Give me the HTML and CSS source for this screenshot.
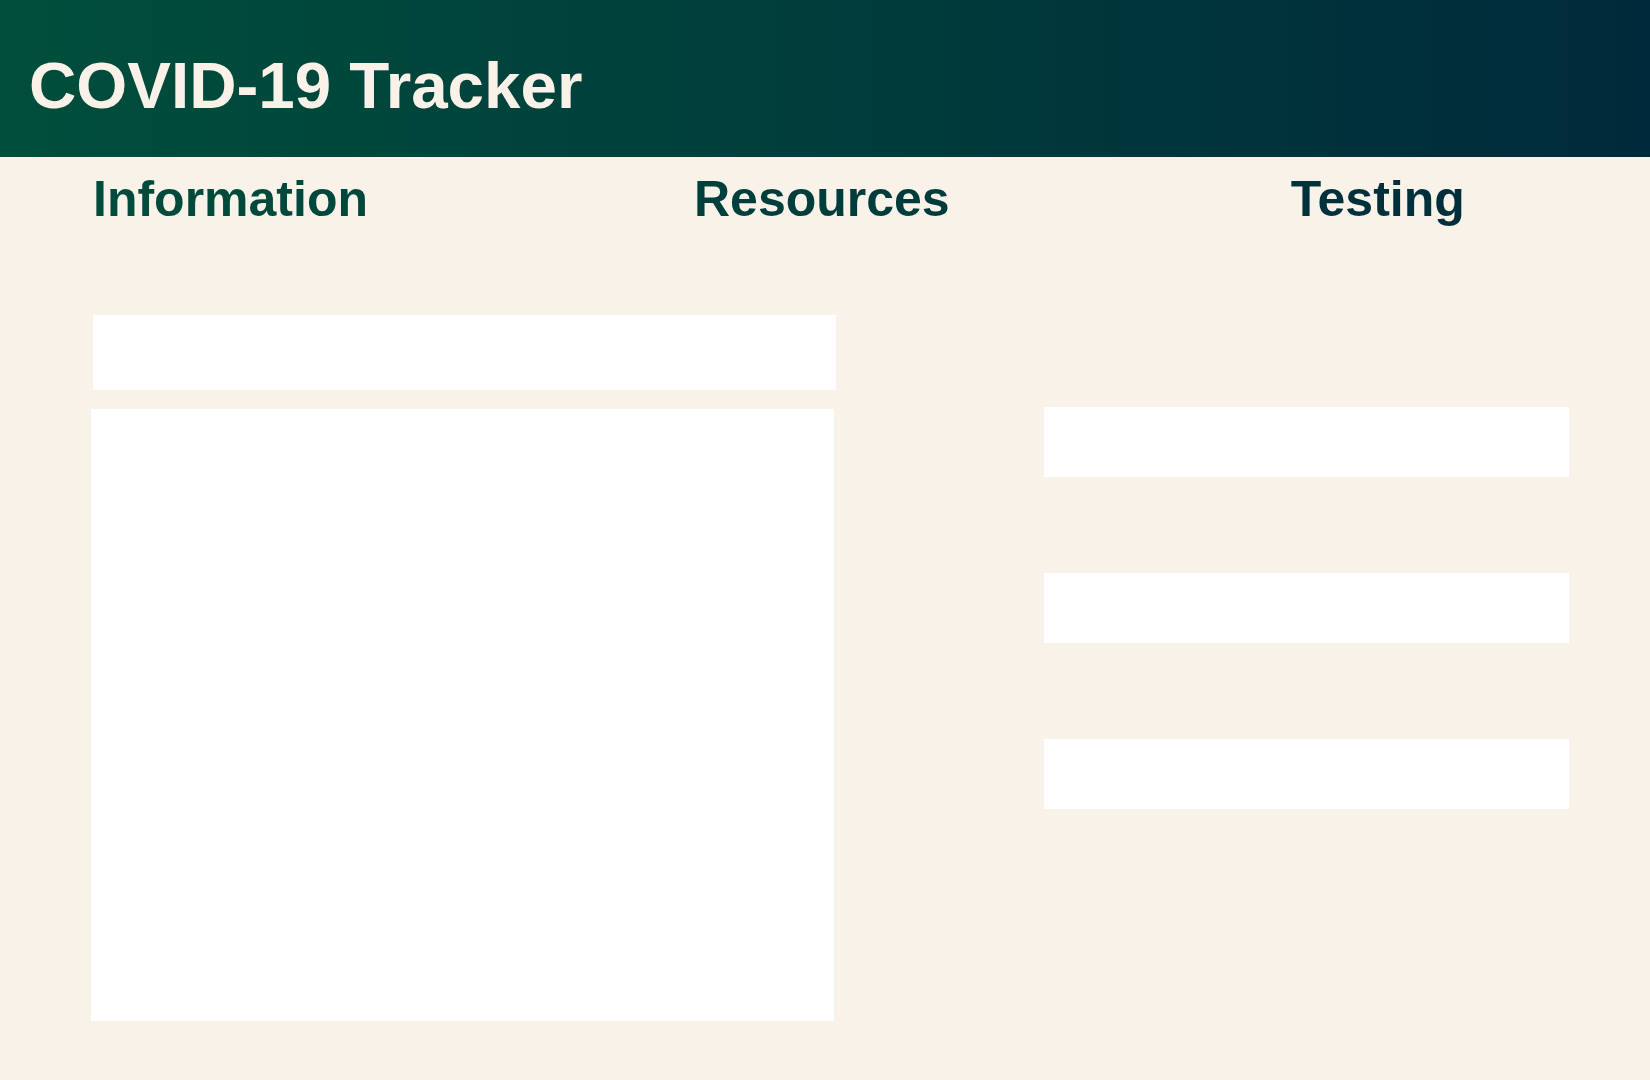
FILE: index.html
```html
<!DOCTYPE html>
<html lang="en">
<head>
<meta charset="utf-8">
<title>COVID-19 Tracker</title>
<link rel="stylesheet" href="styles.css">
</head>
<body>
<header class="site-header">
  <h1 class="site-title">COVID-19 Tracker</h1>
</header>
<nav class="main-nav">
  <span class="nav-item">Information</span>
  <span class="nav-item">Resources</span>
  <span class="nav-item nav-item--last">Testing</span>
</nav>
<main class="content">
  <section class="left-col">
    <div class="panel panel--search"></div>
    <div class="panel panel--main"></div>
  </section>
  <section class="right-col">
    <div class="panel panel--stat"></div>
    <div class="panel panel--stat"></div>
    <div class="panel panel--stat"></div>
  </section>
</main>
</body>
</html>
```
FILE: styles.css
```css
* { box-sizing: border-box; }

html, body {
  margin: 0;
  padding: 0;
}

body {
  background: #f9f2e9;
  font-family: "Liberation Sans", Arial, sans-serif;
  min-height: 1080px;
}

.site-header {
  height: 157px;
  padding: 53px 0 0 29px;
  background: linear-gradient(90deg, #004e3c 0%, #003d3b 50%, #002a3b 100%);
}

.site-title {
  margin: 0;
  font-size: 65.5px;
  line-height: 1;
  font-weight: 700;
  color: #faf2e8;
}

.main-nav {
  display: flex;
  margin-top: 17px;
  padding: 0 0 14px 93px;
  gap: 326px;
  font-size: 50px;
  line-height: 1;
  font-weight: 700;
  background: linear-gradient(90deg, #004e3c 0%, #003d3b 50%, #002a3b 100%);
  -webkit-background-clip: text;
  background-clip: text;
  color: transparent;
}

.nav-item--last {
  margin-left: 15px;
}

.content {
  display: flex;
  gap: 208px;
  margin-top: 77px;
  padding-left: 91px;
}

.left-col {
  display: flex;
  flex-direction: column;
  gap: 19px;
  width: 745px;
}

.right-col {
  display: flex;
  flex-direction: column;
  gap: 96px;
  padding-top: 92px;
  width: 525px;
}

.panel {
  background: #ffffff;
}

.panel--search {
  height: 75px;
  width: 743px;
  margin-left: 2px;
}

.panel--main {
  height: 612px;
  width: 743px;
}

.panel--stat {
  height: 70px;
  width: 525px;
}
```
